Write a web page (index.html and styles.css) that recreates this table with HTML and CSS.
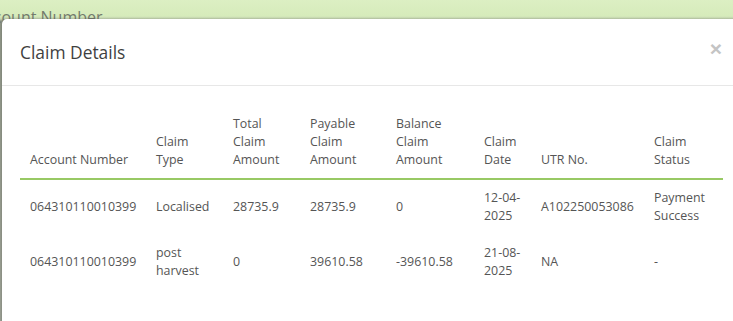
FILE: index.html
```html
<!DOCTYPE html>
<html>
<head>
<meta charset="utf-8">
<link rel="stylesheet" href="styles.css">
</head>
<body>
<div class="page">
  <div class="behind">Account Number</div>
  <div class="modal">
    <div class="modal-header">
      <h4 class="modal-title">Claim Details</h4>
      <span class="close">&times;</span>
    </div>
    <div class="modal-body">
      <table class="claims">
        <colgroup>
          <col class="c1"><col class="c2"><col class="c3"><col class="c4">
          <col class="c5"><col class="c6"><col class="c7"><col class="c8">
        </colgroup>
        <thead>
          <tr>
            <th>Account Number</th>
            <th>Claim Type</th>
            <th>Total Claim Amount</th>
            <th>Payable Claim Amount</th>
            <th>Balance Claim Amount</th>
            <th>Claim Date</th>
            <th>UTR No.</th>
            <th>Claim Status</th>
          </tr>
        </thead>
        <tbody>
          <tr>
            <td>064310110010399</td>
            <td>Localised</td>
            <td>28735.9</td>
            <td>28735.9</td>
            <td>0</td>
            <td>12-04-2025</td>
            <td>A102250053086</td>
            <td>Payment Success</td>
          </tr>
          <tr>
            <td>064310110010399</td>
            <td>post harvest</td>
            <td>0</td>
            <td>39610.58</td>
            <td>-39610.58</td>
            <td>21-08-2025</td>
            <td>NA</td>
            <td>-</td>
          </tr>
        </tbody>
      </table>
    </div>
  </div>
</div>
</body>
</html>
```

FILE: styles.css
```css
html, body {
  margin: 0;
  padding: 0;
}
body {
  width: 733px;
  height: 321px;
  overflow: hidden;
  background: #d9eec0;
  font-family: "Open Sans", "Noto Sans", sans-serif;
}
.page {
  position: relative;
  width: 733px;
  height: 321px;
  overflow: hidden;
  background: linear-gradient(#dcefc3 0, #d6ebbb 16px, #c3d2b0 19px, #8e9486 21px, #9a9f93 100%);
}
.behind {
  position: absolute;
  left: -24px;
  top: 6px;
  font-size: 16px;
  line-height: 22px;
  color: #737a6c;
}
.modal {
  position: absolute;
  left: 2px;
  top: 19px;
  width: 740px;
  height: 330px;
  background: #fff;
  border-radius: 5px 0 0 0;
  box-shadow: 0 0 2px rgba(0, 0, 0, 0.3);
}
.modal-header {
  display: flex;
  align-items: center;
  justify-content: space-between;
  padding: 21px 18px 21px 18px;
  border-bottom: 1px solid #e7e7e7;
}
.modal-title {
  margin: 0;
  font-size: 17.4px;
  line-height: 24px;
  font-weight: 400;
  color: #3f3f3f;
}
.close {
  font-family: "Liberation Sans", Arial, sans-serif;
  font-size: 21px;
  font-weight: 700;
  line-height: 24px;
  color: #c4c4c4;
  margin-right: 2px;
  margin-top: -6px;
}
.modal-body {
  padding: 19px 19px 0 18px;
}
.claims {
  border-collapse: collapse;
  table-layout: fixed;
  width: 703px;
  font-size: 12.4px;
  line-height: 18px;
  color: #555;
}
.c1 { width: 128px; }
.c2 { width: 77px; }
.c3 { width: 77px; }
.c4 { width: 86px; }
.c5 { width: 88px; }
.c6 { width: 57px; }
.c7 { width: 113px; }
.c8 { width: 77px; }
.claims th,
.claims td {
  padding: 9px 8px 10px;
  text-align: left;
  vertical-align: middle;
  font-weight: 400;
}
.claims th {
  padding: 10px 8px 9px;
  vertical-align: bottom;
  border-bottom: 2px solid #98c964;
}
.claims th:first-child,
.claims td:first-child {
  padding-left: 10px;
}
```
